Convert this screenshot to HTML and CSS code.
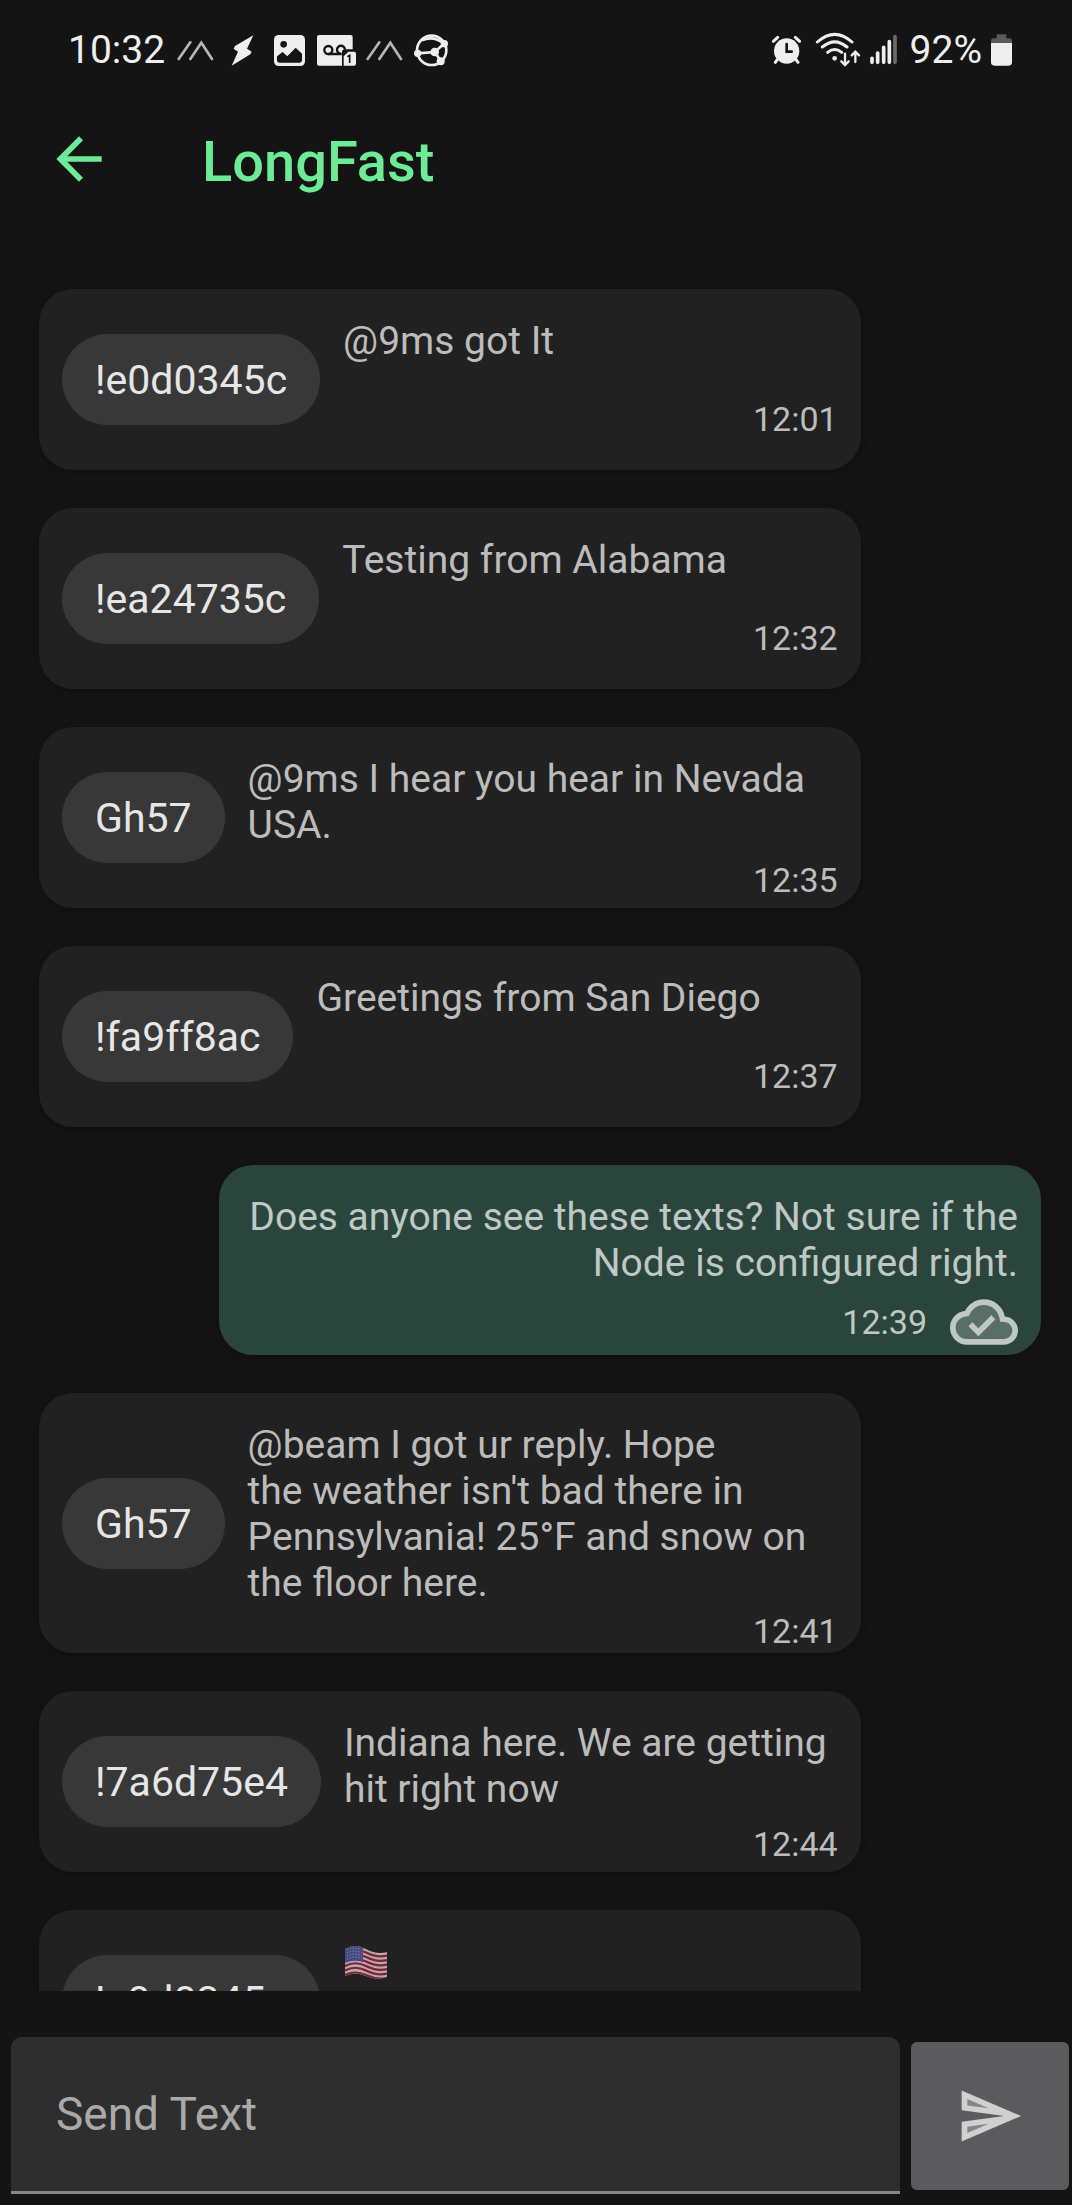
FILE: index.html
```html
<!DOCTYPE html>
<html lang="en">
<head>
<meta charset="utf-8">
<meta name="viewport" content="width=device-width, initial-scale=1">
<title>LongFast</title>
<link rel="stylesheet" href="styles.css">
</head>
<body>
<div class="status">
  <div class="status-left">
    <span class="clock">10:32</span>
    <svg class="w37" viewBox="414 60 111 120" fill="none" stroke="#b5b5b5" stroke-width="8" stroke-linecap="round" aria-hidden="true"><path d="M419 147 454 97M454 147 487 98 519 147"/></svg>
    <svg class="w37" viewBox="555 60 111 120" aria-hidden="true"><path fill="#eee" d="M643 76 588 108 584 116 597 125 578 167 634 133 638 125 624 116Z"/></svg>
    <svg class="w35" viewBox="696 60 105 120" aria-hidden="true"><rect x="705" y="75" width="93" height="93" rx="14" fill="#eee"/><circle cx="734" cy="103" r="10" fill="#141414"/><path fill="#141414" d="M714 139 731 126 745 139 770 113 789 131V151Q789 158 782 158H721Q714 158 714 151Z"/></svg>
    <svg class="w40" viewBox="831 60 120 120" aria-hidden="true"><path fill="#eee" d="M840 75H935Q941 75 941 81V118H918Q909 118 909 128V167H840Q834 167 834 161V81Q834 75 840 75Z"/><g fill="none" stroke="#141414" stroke-width="7"><circle cx="868" cy="120" r="12"/><path d="M908 131A12 12 0 1 1 918 119M868 132H908"/></g><path fill="#eee" d="M914 167V139L928 125H945Q951 125 951 131V161Q951 167 945 167Z"/><path d="M925 140 932 136V159" fill="none" stroke="#141414" stroke-width="5"/></svg>
    <svg class="w37" viewBox="414 60 111 120" fill="none" stroke="#b5b5b5" stroke-width="8" stroke-linecap="round" aria-hidden="true"><path d="M419 147 454 97M454 147 487 98 519 147"/></svg>
    <svg class="w36" viewBox="1119 60 108 120" aria-hidden="true"><g fill="none" stroke="#eee" stroke-width="8"><circle cx="1175" cy="121" r="44"/><path d="M1133 130 1184 126 1212 101M1184 126 1202 152M1146 91Q1180 76 1212 101"/></g><g fill="#eee"><circle cx="1133" cy="130" r="11"/><circle cx="1184" cy="126" r="13"/><circle cx="1213" cy="101" r="11"/><circle cx="1202" cy="154" r="12"/></g></svg>
  </div>
  <div class="status-right">
    <svg class="w31" viewBox="96 60 93 120" aria-hidden="true"><circle cx="143" cy="123" r="38" fill="#eee"/><path fill="none" stroke="#eee" stroke-width="9" stroke-linecap="round" d="M103 94 116 82M182 94 169 82M116 147 109 157M170 147 177 157"/><path fill="none" stroke="#141414" stroke-width="8" stroke-linecap="round" d="M143 102V125H158"/></svg>
    <svg class="w50" viewBox="216 60 150 120" fill="none" stroke="#eee" stroke-width="9" stroke-linecap="round" aria-hidden="true"><path d="M235 96Q287 50 339 96M250 111Q287 80 324 111M266 127Q287 110 308 127"/><circle cx="287" cy="145" r="7" fill="#eee" stroke="none"/><path stroke-width="7" d="M318 131V163M307 154 318 165 329 154M349 156V126M338 136 349 125 360 136"/></svg>
    <svg class="w27" viewBox="393 60 81 120" fill="none" stroke="#eee" stroke-width="11" stroke-linecap="round" aria-hidden="true"><path d="M399 145V157M416 129V157M434 112V157M451 95V157"/><path stroke="#6b6b6b" d="M468 80V157"/></svg>
    <span class="percent">92%</span>
    <svg class="w21" viewBox="753 60 63 120" aria-hidden="true"><path fill="#5a5a5a" d="M770 73H799V85H808Q816 85 816 94V100H753V94Q753 85 761 85H770Z"/><path fill="#eee" d="M753 99H816V157Q816 167 806 167H763Q753 167 753 157Z"/></svg>
  </div>
</div>

<header class="appbar">
  <button class="back" type="button" aria-label="Back"><svg class="icon" viewBox="0 0 24 24" fill="currentColor"><path d="M20 11H7.83l5.59-5.59L12 4l-8 8 8 8 1.41-1.41L7.83 13H20v-2z"/></svg></button>
  <h1 class="title">LongFast</h1>
</header>

<main class="messages">
  <article class="card"><span class="chip">!e0d0345c</span><div class="body"><p class="text">@9ms got It</p><div class="meta"><time>12:01</time></div></div></article>
  <article class="card"><span class="chip">!ea24735c</span><div class="body"><p class="text">Testing from Alabama</p><div class="meta"><time>12:32</time></div></div></article>
  <article class="card"><span class="chip">Gh57</span><div class="body"><p class="text">@9ms I hear you hear in Nevada USA.</p><div class="meta"><time>12:35</time></div></div></article>
  <article class="card"><span class="chip">!fa9ff8ac</span><div class="body"><p class="text">Greetings from San Diego</p><div class="meta"><time>12:37</time></div></div></article>
  <article class="card sent"><div class="body"><p class="text">Does anyone see these texts? Not sure if the Node is configured right.</p><div class="meta"><time>12:39</time><svg class="cloud" viewBox="0 4 24 16" role="img" aria-label="Delivered"><path fill="#586f66" d="M19 11h-1.500v-.5C17.500 7.460 15.040 5 12 5 9.500 5 7.400 6.600 6.700 9H6c-2.500 0-5 2-5 5s2.500 5 5 5h13c2 0 4-2 4-4s-2-4-4-4z"/><path fill="#bfc8c5" d="M19.350 10.040C18.670 6.590 15.640 4 12 4 9.110 4 6.610 5.640 5.360 8.040 2.350 8.360 0 10.900 0 14c0 3.310 2.690 6 6 6h13c2.760 0 5-2.240 5-5 0-2.640-2.050-4.780-4.650-4.960zM19 18H6c-2.210 0-4-1.790-4-4 0-2.050 1.530-3.760 3.560-3.970l1.070-.11.5-.95C8.080 7.140 9.940 6 12 6c2.620 0 4.880 1.860 5.390 4.430l.3 1.500 1.530.11C20.780 12.140 22 13.450 22 15c0 1.650-1.350 3-3 3zm-9-3.820l-2.090-2.090L6.500 13.500 10 17l6.010-6.010-1.410-1.410z"/></svg></div></div></article>
  <article class="card"><span class="chip">Gh57</span><div class="body"><p class="text">@beam I got ur reply. Hope<br>the weather isn't bad there in Pennsylvania! 25°F and snow on the floor here.</p><div class="meta"><time>12:41</time></div></div></article>
  <article class="card"><span class="chip">!7a6d75e4</span><div class="body"><p class="text">Indiana here. We are getting hit right now</p><div class="meta"><time>12:44</time></div></div></article>
  <article class="card"><span class="chip">!e0d0345c</span><div class="body"><p class="text"><svg class="flag" viewBox="0 0 46 46" role="img" aria-label="United States flag"><defs><clipPath id="wave"><path d="M2 10Q12 4 23 10T44 13V38Q34 42 23 37T2 37Z"/></clipPath></defs><g clip-path="url(#wave)"><rect width="46" height="46" fill="#b9a9ad"/><path fill="none" stroke="#7c2435" stroke-width="2.200" d="M2 9Q12 4 23 9T44 12M2 13.500Q12 8 23 13.500T44 16.500M2 18Q12 12.500 23 18T44 21M2 22.500Q12 17 23 22.500T44 25.500M2 27Q12 21.500 23 27T44 30M2 31.500Q12 26 23 31.500T44 34.500M2 36Q12 31 23 36T44 39"/><path fill="#44497f" d="M2 8Q11 4 20 8V23Q11 20 2 24Z"/><path fill="none" stroke="#a5a7c4" stroke-width="1" stroke-dasharray="1 2" d="M4 11Q11 7 19 11M4 14Q11 10 19 14M4 17Q11 13 19 17M4 20Q11 16 19 20"/></g></svg></p></div></article>
</main>

<form class="composer">
  <input class="field" type="text" placeholder="Send Text" aria-label="Send Text">
  <button class="send" type="button" aria-label="Send"><svg class="icon" viewBox="0 0 24 24"><path fill="#858586" d="M3 4.500 18 11 3 9zM3 19.500 18 13 3 15z"/><path fill="#d0d0d0" d="M4.010 6.030l7.510 3.220-7.520-1 .01-2.220m7.500 8.720L4 17.970v-2.220l7.510-1M2.010 3L2 10l15 2-15 2 .01 7L23 12 2.010 3z"/></svg></button>
</form>
</body>
</html>
```
FILE: styles.css
```css
* { box-sizing: border-box; }

body {
  margin: 0;
  height: 100vh;
  display: flex;
  flex-direction: column;
  overflow: hidden;
  background: #141414;
  color: #e4e4e4;
  font-family: Roboto, "Liberation Sans", sans-serif;
  font-size: 39px;
  line-height: 46px;
}

svg { display: block; flex: none; }

button {
  border: 0;
  padding: 0;
  background: none;
  color: inherit;
}

/* System status bar */
.status {
  flex: none;
  display: flex;
  justify-content: space-between;
  height: 80px;
  padding: 20px 60px 0 68px;
  color: #eee;
}
.status svg { height: 40px; }
.status-left,
.status-right { display: flex; align-items: center; }
.status-left { gap: 10px; }
.status-right { gap: 9px; }
.clock { margin-right: 2px; }
.percent { margin-left: 4px; }
.w21 { width: 21px; }
.w27 { width: 27px; }
.w31 { width: 31px; }
.w35 { width: 35px; }
.w36 { width: 36px; }
.w37 { width: 37px; }
.w40 { width: 40px; }
.w50 { width: 50px; }

/* App bar */
.appbar {
  flex: none;
  display: flex;
  align-items: center;
  gap: 89px;
  height: 158px;
  padding: 0 45px;
  color: #6eeb96;
}
.icon { width: 68px; height: 68px; }
.title {
  margin: 0;
  padding-top: 5px;
  font-size: 56px;
  font-weight: 500;
  line-height: 66px;
}

/* Message list */
.messages {
  flex: 1;
  min-height: 0;
  overflow: hidden;
  display: flex;
  flex-direction: column;
  gap: 38px;
  padding: 51px 31px 0 39px;
}
.card {
  flex: none;
  display: flex;
  align-items: center;
  gap: 23px;
  width: 82%;
  min-height: 181px;
  padding: 0 23px;
  border-radius: 34px;
  background: #212121;
  color: #bcbcbc;
  box-shadow: 0 2px 6px #0f0f0f;
}
.sent {
  align-self: flex-end;
  background: #2a453c;
  color: #bfc8c5;
  text-align: right;
}
.chip {
  flex: none;
  padding: 23px 33px 22px;
  border-radius: 46px;
  background: #383838;
  color: #e6e6e6;
  font-size: 41px;
}
.body {
  flex: 1;
  align-self: stretch;
  display: flex;
  flex-direction: column;
  padding-top: 29px;
}
.text { margin: 0; }
.meta {
  flex: 1;
  display: flex;
  justify-content: flex-end;
  align-items: center;
  gap: 23px;
  padding-top: 3px;
  font-size: 34px;
  line-height: 44px;
}
.cloud { width: 68px; height: 46px; margin: 10px 0; }
.flag { width: 46px; height: 46px; }

/* Composer */
.composer {
  flex: none;
  display: flex;
  align-items: center;
  gap: 11px;
  padding: 46px 3px 11px 11px;
}
.field {
  flex: 1;
  min-width: 0;
  height: 157px;
  padding: 0 45px;
  border: 0;
  border-bottom: 3px solid #868686;
  border-radius: 11px 11px 0 0;
  background: #2e2e2e;
  color: #e6e6e6;
  font: inherit;
  font-size: 46px;
  outline: 0;
}
.field::placeholder { color: #a9a9a9; opacity: 1; }
.send {
  display: grid;
  place-items: center;
  width: 158px;
  height: 148px;
  border-radius: 6px;
  background: #5b5b5d;
}
```
